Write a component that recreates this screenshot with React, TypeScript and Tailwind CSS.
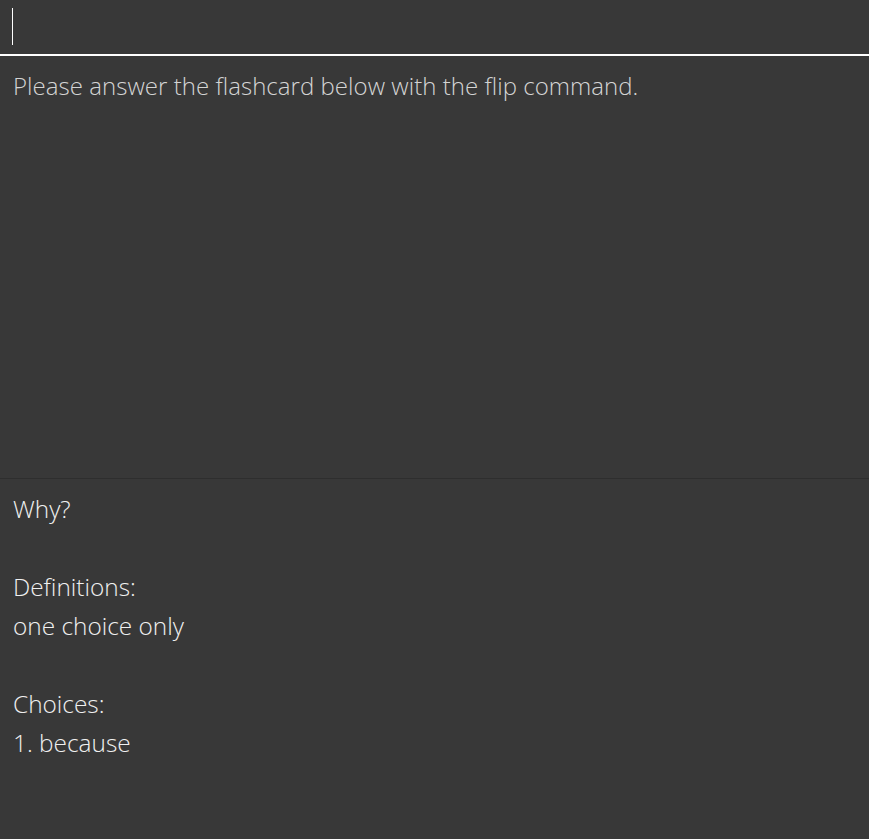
export default function App() {
  const font = { fontFamily: '"Open Sans", "Noto Sans", sans-serif' };
  return (
    <div className="w-[869px] h-[839px] bg-[#383838] flex flex-col overflow-hidden" style={font}>
      <div className="h-[54px] flex items-start pl-[12px] pt-[8px] shrink-0">
        <div className="w-px h-[37px] bg-white" />
      </div>
      <div className="h-[2px] bg-white shrink-0" />
      <div className="h-[422px] shrink-0 px-[13px] pt-[14px]">
        <div className="text-[24px] font-light leading-[32px] text-[#d4d4d4] tracking-[0.04px]">
          Please answer the flashcard below with the flip command.
        </div>
      </div>
      <div className="h-px bg-[#2e2e2e] shrink-0" />
      <div className="flex-1 px-[13px] pt-[10px] text-[24.4px] font-light leading-[39px] text-[#f0f0f0]">
        <div>Why?</div>
        <div>&nbsp;</div>
        <div>Definitions:</div>
        <div>one choice only</div>
        <div>&nbsp;</div>
        <div>Choices:</div>
        <div>1. because</div>
      </div>
    </div>
  );
}
